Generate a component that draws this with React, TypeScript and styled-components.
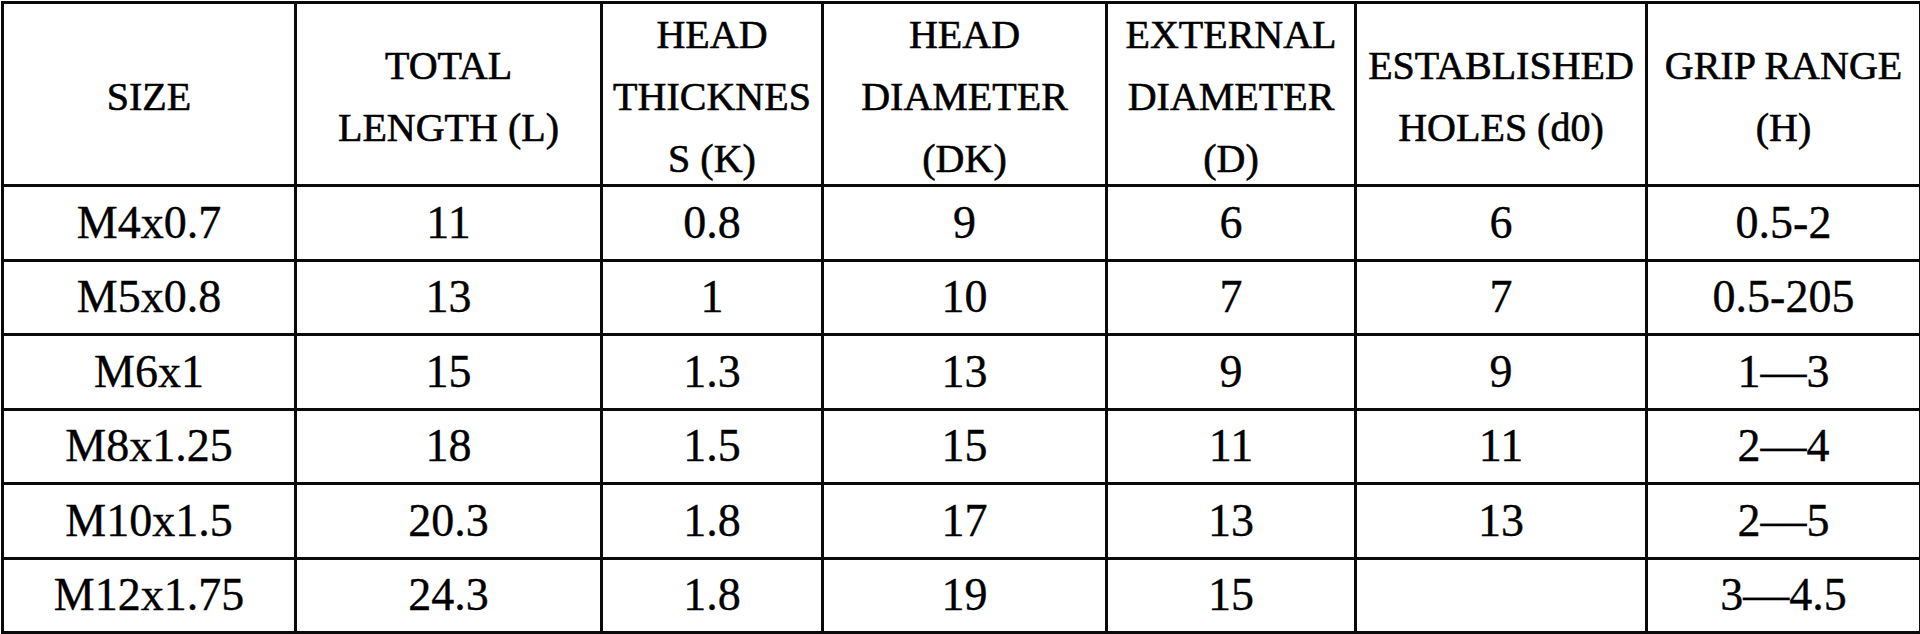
import React from "react";
import styled, { createGlobalStyle } from "styled-components";

const GlobalStyle = createGlobalStyle`
  html, body {
    margin: 0;
    padding: 0;
    background: #ffffff;
  }
  body {
    font-family: "Liberation Serif", "Times New Roman", serif;
    color: #000;
  }
`;

const serif = `"Liberation Serif", "Times New Roman", serif`;

const Page = styled.div`
  width: 1920px;
  height: 634px;
  padding: 1px 1px 0 1px;
  box-sizing: border-box;
  background: #fff;
  overflow: hidden;
`;

const Table = styled.table`
  width: 100%;
  border-collapse: collapse;
  table-layout: fixed;
  font-family: ${serif};
`;

const HeadRow = styled.tr`
  height: 183px;
`;

const BodyRow = styled.tr`
  height: 74.5px;
`;

const HeadCell = styled.th`
  border: 3px solid #0a0a0a;
  padding: 0 4px;
  font-family: ${serif};
  font-weight: normal;
  font-size: 40px;
  text-align: center;
  vertical-align: middle;
  white-space: nowrap;
  color: #000;
  -webkit-text-stroke: 0.6px #000;
`;

// lines sit 62px apart; the negative bottom margin keeps 3-line cells within the row
const HeadText = styled.div`
  line-height: 62px;
  margin-bottom: -6px;
`;

const Cell = styled.td`
  border: 3px solid #0a0a0a;
  padding: 0 4px;
  font-family: ${serif};
  font-size: 46px;
  line-height: 1;
  text-align: center;
  vertical-align: middle;
  white-space: nowrap;
  color: #000;
  -webkit-text-stroke: 0.35px #000;
`;

const colWidths = [293, 306, 221, 284, 249, 291, 274];

const headers: string[][] = [
  ["SIZE"],
  ["TOTAL", "LENGTH (L)"],
  ["HEAD", "THICKNES", "S (K)"],
  ["HEAD", "DIAMETER", "(DK)"],
  ["EXTERNAL", "DIAMETER", "(D)"],
  ["ESTABLISHED", "HOLES (d0)"],
  ["GRIP RANGE", "(H)"],
];

const rows: string[][] = [
  ["M4x0.7", "11", "0.8", "9", "6", "6", "0.5-2"],
  ["M5x0.8", "13", "1", "10", "7", "7", "0.5-205"],
  ["M6x1", "15", "1.3", "13", "9", "9", "1—3"],
  ["M8x1.25", "18", "1.5", "15", "11", "11", "2—4"],
  ["M10x1.5", "20.3", "1.8", "17", "13", "13", "2—5"],
  ["M12x1.75", "24.3", "1.8", "19", "15", "", "3—4.5"],
];

export default function App() {
  return (
    <>
      <GlobalStyle />
      <Page>
        <Table>
          <colgroup>
            {colWidths.map((w, i) => (
              <col key={i} style={{ width: `${w}px` }} />
            ))}
          </colgroup>
          <thead>
            <HeadRow>
              {headers.map((lines, i) => (
                <HeadCell key={i}>
                  <HeadText>
                    {lines.map((line, j) => (
                      <React.Fragment key={j}>
                        {j > 0 && <br />}
                        {line}
                      </React.Fragment>
                    ))}
                  </HeadText>
                </HeadCell>
              ))}
            </HeadRow>
          </thead>
          <tbody>
            {rows.map((row, i) => (
              <BodyRow key={i}>
                {row.map((value, j) => (
                  <Cell key={j}>{value}</Cell>
                ))}
              </BodyRow>
            ))}
          </tbody>
        </Table>
      </Page>
    </>
  );
}
